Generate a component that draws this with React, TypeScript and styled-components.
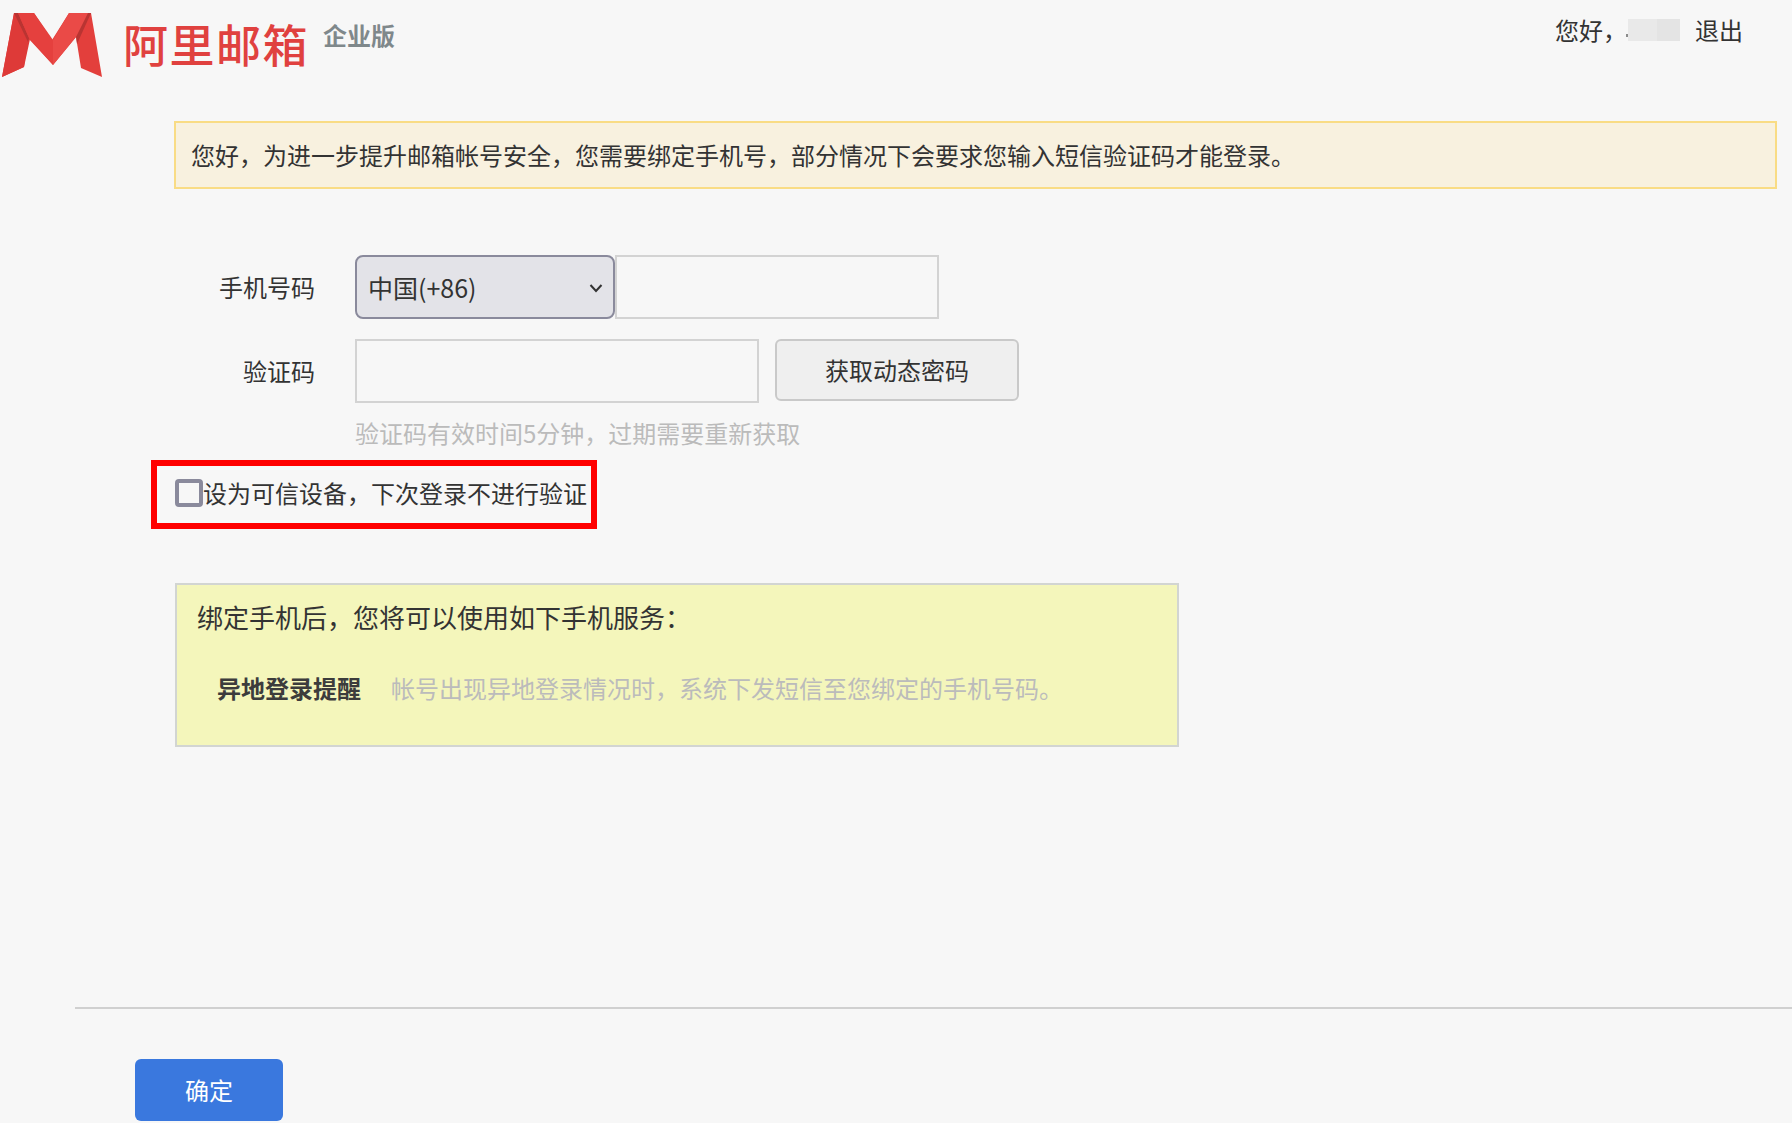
import React from "react";
import styled, { createGlobalStyle } from "styled-components";

const Global = createGlobalStyle`
  html, body { margin: 0; padding: 0; background: #f7f7f7; }
  body { font-family: "Noto Sans CJK SC", "Noto Sans", sans-serif; color: #333; }
  * { box-sizing: border-box; }
`;

const Page = styled.div`
  width: 1792px;
  height: 1123px;
  overflow: hidden;
  background: #f7f7f7;
  font-size: 24px;
  line-height: 34px;
`;

const Header = styled.header`
  height: 121px;
  display: flex;
  justify-content: space-between;
  align-items: flex-start;
`;

const Logo = styled.div`
  display: flex;
  align-items: flex-start;
  padding-left: 1px;
`;

const LogoMark = styled.svg`
  width: 102px;
  height: 78px;
  display: block;
`;

const LogoName = styled.span`
  margin: 16px 0 0 20px;
  font-size: 45px;
  line-height: 56px;
  letter-spacing: 1.5px;
  font-weight: 500;
  color: #e0413f;
`;

const Edition = styled.span`
  margin: 18px 0 0 14px;
  font-size: 24px;
  line-height: 34px;
  font-weight: 700;
  color: #7f888b;
`;

const UserBar = styled.div`
  display: flex;
  align-items: center;
  padding: 13px 49px 0 0;
`;

const Masked = styled.span`
  position: relative;
  width: 52px;
  height: 22px;
  margin: 0 15px 0 1px;
  background: linear-gradient(90deg, #e9e9e9 55%, #e4e4e4 55%);

  &::before {
    content: "";
    position: absolute;
    left: -2px;
    top: 15px;
    width: 2px;
    height: 3px;
    background: #8c8c8c;
  }
`;

const Main = styled.main`
  padding: 0 15px 0 151px;
`;

const Notice = styled.div`
  height: 68px;
  margin-left: 23px;
  padding-left: 15px;
  display: flex;
  align-items: center;
  background: #f8f1df;
  border: 2px solid #f9dc85;
`;

const FormRow = styled.div<{ $top: number }>`
  display: flex;
  align-items: flex-start;
  margin-top: ${(p) => p.$top}px;
`;

const FieldLabel = styled.label`
  width: 164px;
  height: 64px;
  margin-right: 40px;
  display: flex;
  align-items: center;
  justify-content: flex-end;
`;

const SelectWrap = styled.div`
  position: relative;
  width: 260px;
  height: 64px;
`;

const CountrySelect = styled.select`
  appearance: none;
  width: 100%;
  height: 100%;
  padding: 0 0 0 11px;
  background: #e3e3e8;
  border: 2px solid #8a8a9c;
  border-radius: 8px;
  font: inherit;
  font-size: 25px;
  color: #333;
`;

const Chevron = styled.svg`
  position: absolute;
  right: 12px;
  top: 28px;
  width: 14px;
  height: 10px;
  pointer-events: none;
`;

const TextInput = styled.input<{ $width: number }>`
  width: ${(p) => p.$width}px;
  height: 64px;
  background: #f7f7f7;
  border: 2px solid #d3d3d3;
  border-radius: 0;
`;

const CodeButton = styled.button`
  width: 244px;
  height: 62px;
  margin-left: 16px;
  background: #efefef;
  border: 2px solid #c9c9c9;
  border-radius: 6px;
  font: inherit;
  color: #333;
`;

const Hint = styled.div`
  margin: 13px 0 0 204px;
  color: #bbb;
`;

const TrustBox = styled.label`
  width: 446px;
  height: 69px;
  margin-top: 10px;
  padding: 0 0 4px 18px;
  display: flex;
  align-items: center;
  border: 6px solid #ff0000;
  white-space: nowrap;
`;

const TrustCheck = styled.input`
  appearance: none;
  width: 28px;
  height: 28px;
  margin: 0;
  flex: none;
  background: #f7f7f7;
  border: 4px solid #8a8a9c;
  border-radius: 4px;
`;

const InfoBox = styled.section`
  width: 1004px;
  height: 164px;
  margin: 54px 0 0 24px;
  padding: 15px 0 0 20px;
  background: #f4f6bb;
  border: 2px solid #d2d5d2;
`;

const InfoTitle = styled.div`
  font-size: 26px;
  line-height: 34px;
`;

const ServiceRow = styled.div`
  display: flex;
  margin: 37px 0 0 20px;
`;

const ServiceName = styled.strong`
  width: 174px;
  font-weight: 700;
  color: #3c3c3c;
`;

const ServiceText = styled.span`
  color: #bbb;
`;

const Footer = styled.footer`
  margin: 260px 0 0 75px;
  border-top: 2px solid #d0d0d0;
`;

const ConfirmButton = styled.button`
  display: block;
  width: 148px;
  height: 62px;
  margin: 50px 0 0 60px;
  background: #3a78de;
  border: 0;
  border-radius: 6px;
  font: inherit;
  color: #fff;
`;

export default function App() {
  return (
    <Page>
      <Global />
      <Header>
        <Logo>
          <LogoMark viewBox="0 0 102 78" aria-label="logo">
            <path d="M13 13H33L51 40 L68 13H90L101 77 L80 68 L75 37 L52 65 L27 38 L23 67 L1 77Z" fill="#e33f3c" />
            <path d="M13 13 L29 39 L23 67 L1 77Z" fill="#de3a38" />
            <path d="M13 13 L17 13 L28 38 L27 42Z" fill="#b93432" />
            <path d="M90 13 L86 13 L75 36 L76 44Z" fill="#b93432" />
            <path d="M33 13H17L28 38 L52 65 L52 40Z" fill="#e5403e" />
            <path d="M52 40 L68 13H87L75 37 L52 65Z" fill="#ea4a47" />
          </LogoMark>
          <LogoName>阿里邮箱</LogoName>
          <Edition>企业版</Edition>
        </Logo>
        <UserBar>
          您好，
          <Masked />
          退出
        </UserBar>
      </Header>
      <Main>
        <Notice>您好，为进一步提升邮箱帐号安全，您需要绑定手机号，部分情况下会要求您输入短信验证码才能登录。</Notice>
        <FormRow $top={66}>
          <FieldLabel>手机号码</FieldLabel>
          <SelectWrap>
            <CountrySelect defaultValue="86">
              <option value="86">中国(+86)</option>
            </CountrySelect>
            <Chevron viewBox="0 0 14 10">
              <path d="M1.5 2 L7 8 L12.5 2" fill="none" stroke="#333" strokeWidth="2" />
            </Chevron>
          </SelectWrap>
          <TextInput $width={324} />
        </FormRow>
        <FormRow $top={20}>
          <FieldLabel>验证码</FieldLabel>
          <TextInput $width={404} />
          <CodeButton type="button">获取动态密码</CodeButton>
        </FormRow>
        <Hint>验证码有效时间5分钟，过期需要重新获取</Hint>
        <TrustBox>
          <TrustCheck type="checkbox" />
          设为可信设备，下次登录不进行验证
        </TrustBox>
        <InfoBox>
          <InfoTitle>绑定手机后，您将可以使用如下手机服务：</InfoTitle>
          <ServiceRow>
            <ServiceName>异地登录提醒</ServiceName>
            <ServiceText>帐号出现异地登录情况时，系统下发短信至您绑定的手机号码。</ServiceText>
          </ServiceRow>
        </InfoBox>
      </Main>
      <Footer>
        <ConfirmButton type="button">确定</ConfirmButton>
      </Footer>
    </Page>
  );
}
